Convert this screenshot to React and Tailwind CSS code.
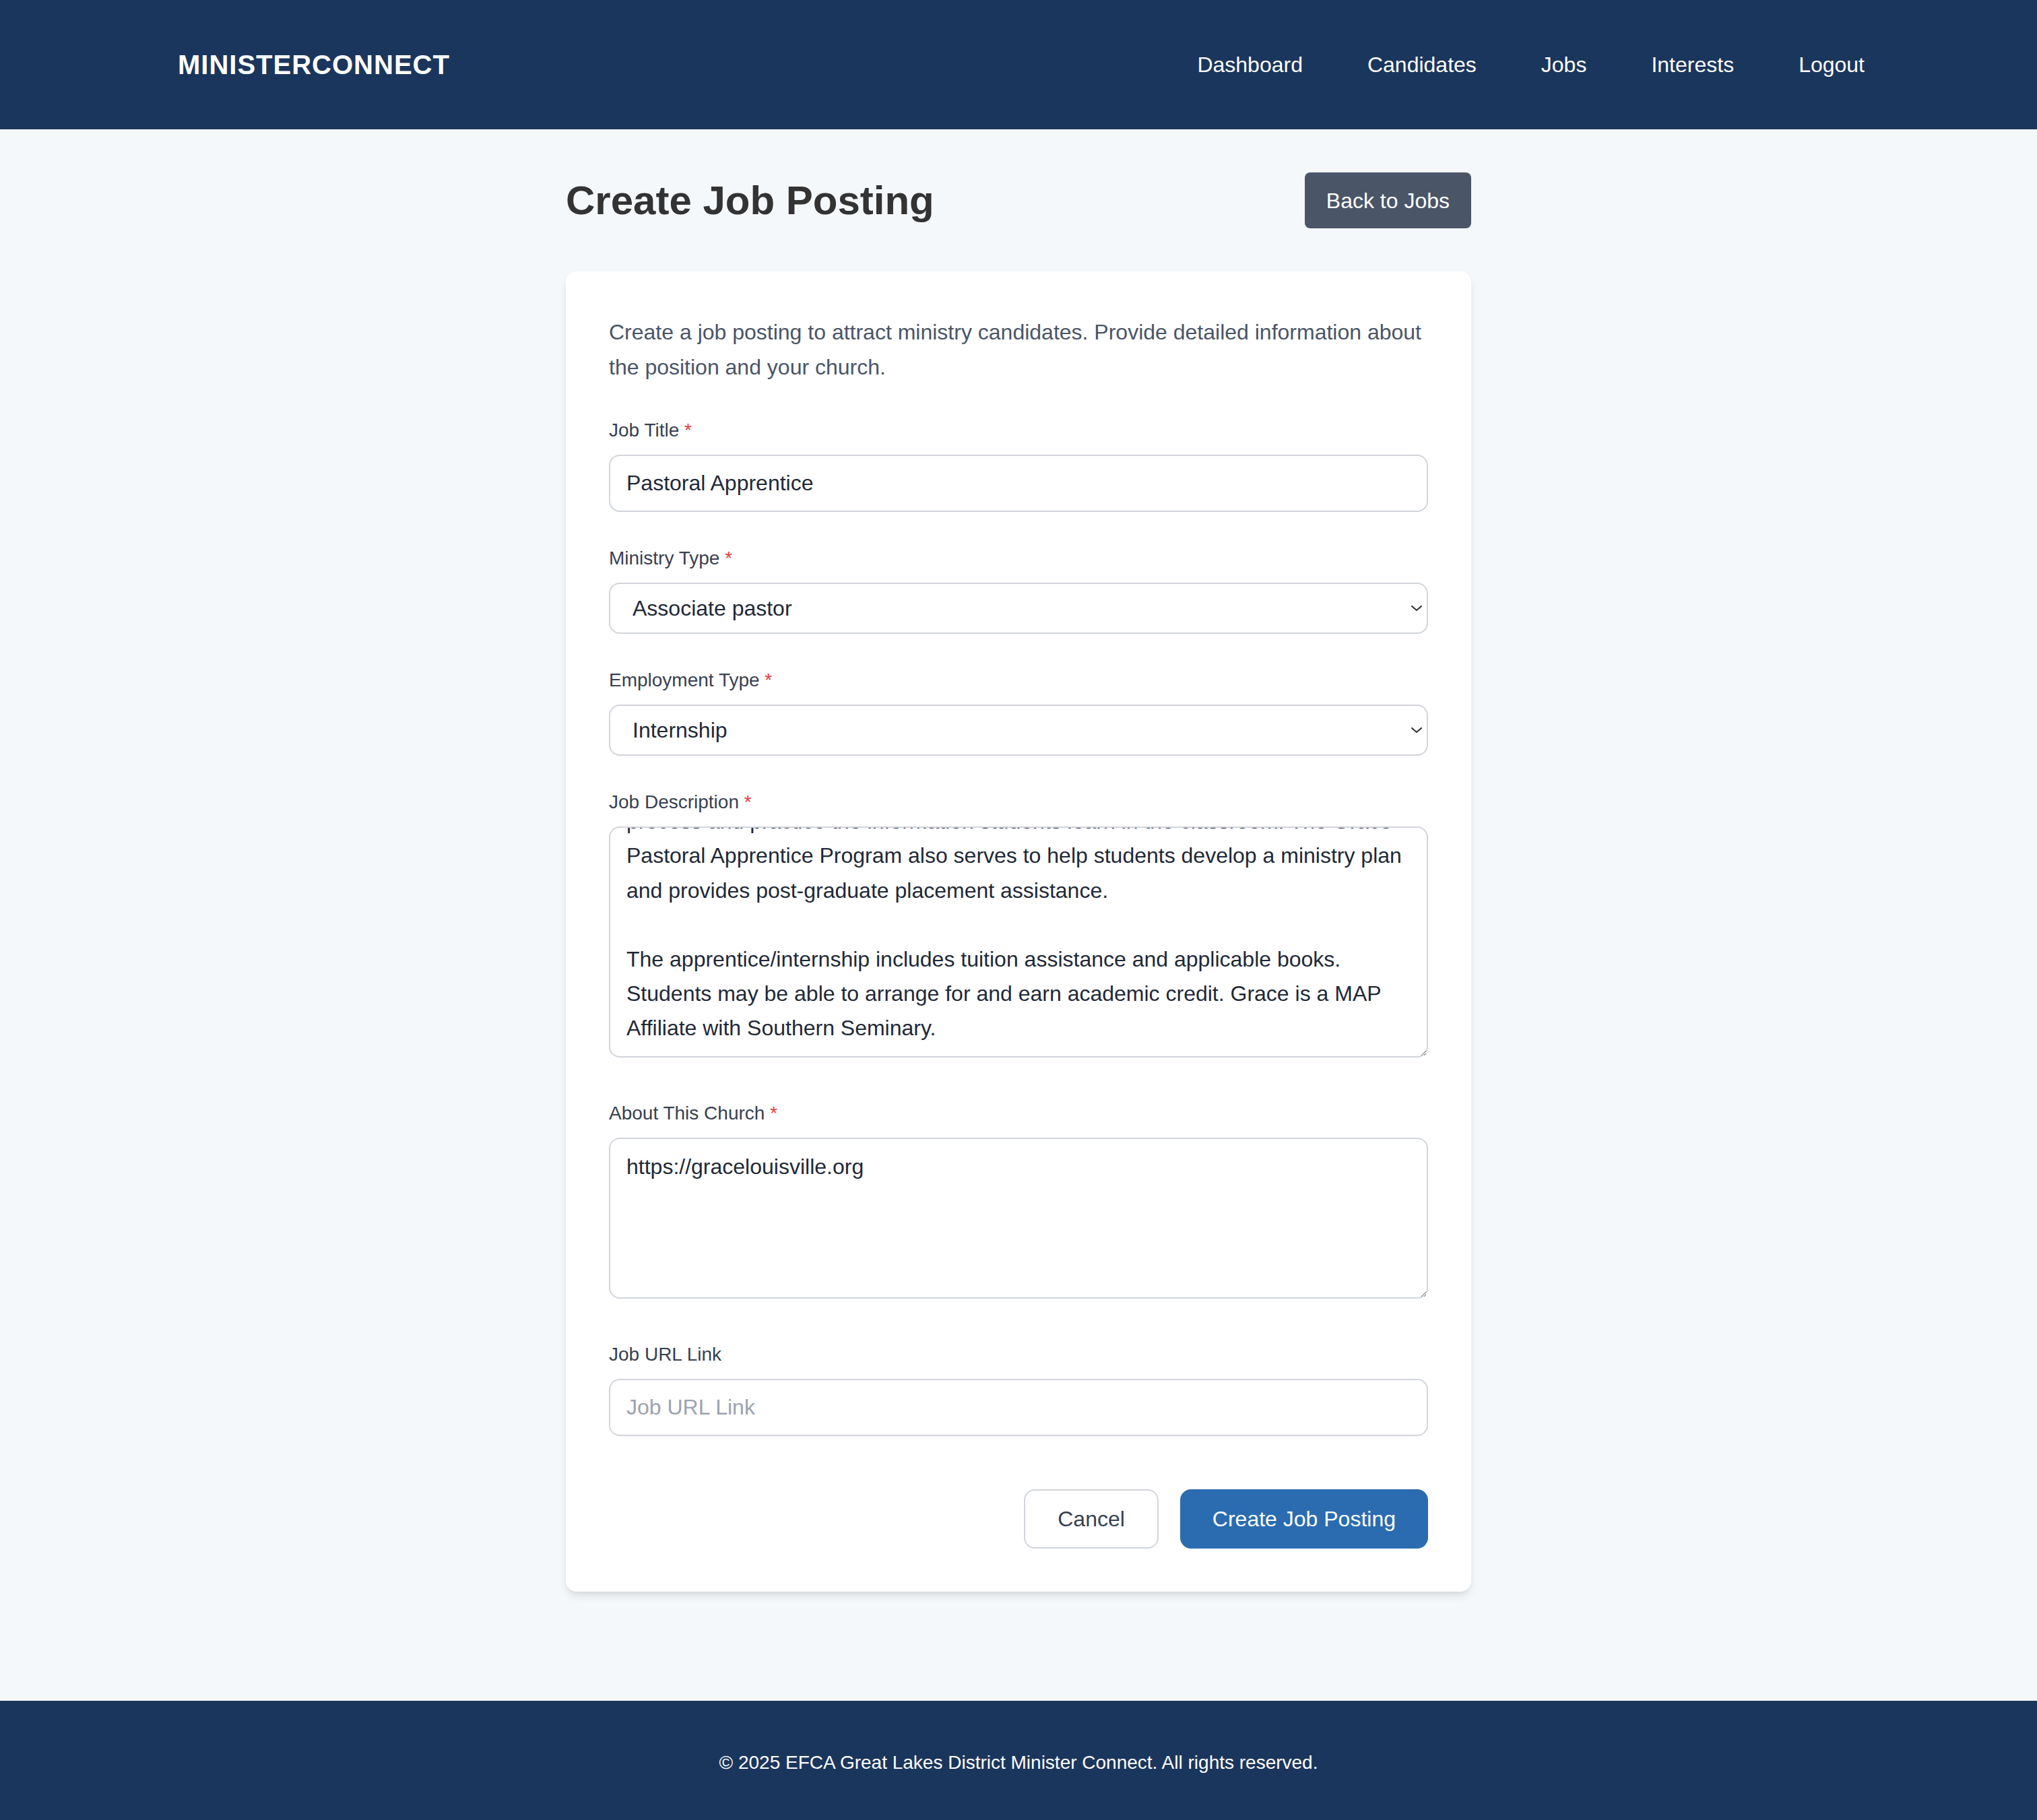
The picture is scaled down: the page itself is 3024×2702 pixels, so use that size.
import React, { useEffect, useRef } from "react";

const descText =
  "Grace Church is seeking a Pastoral Apprentice to join our staff for a two-year apprenticeship. The apprentice will work closely with our pastoral team, gaining hands-on experience in preaching, teaching, discipleship, pastoral care and church leadership.\n\nThe apprenticeship is designed to give seminary students an opportunity to\nprocess and practice the information students learn in the classroom. The Grace Pastoral Apprentice Program also serves to help students develop a ministry plan and provides post-graduate placement assistance.\n\nThe apprentice/internship includes tuition assistance and applicable books. Students may be able to arrange for and earn academic credit. Grace is a MAP Affiliate with Southern Seminary.";

function Label({ children, required }) {
  return (
    <label className="block text-[28px] leading-[41px] text-[#374151] mb-[16px]">
      {children}
      {required && <span className="text-[#e53e3e]"> *</span>}
    </label>
  );
}

function Chevron() {
  return (
    <svg
      className="absolute right-[8px] top-1/2 -translate-y-1/2 pointer-events-none"
      width="18"
      height="12"
      viewBox="0 0 18 12"
      fill="none"
    >
      <path d="M2 3l7 6 7-6" stroke="#333" strokeWidth="2.2" strokeLinecap="round" strokeLinejoin="round" />
    </svg>
  );
}

function SelectField({ value, options }) {
  return (
    <div className="relative">
      <select
        defaultValue={value}
        className="block w-full h-[76px] appearance-none bg-white border-2 border-[#d1d5db] rounded-[16px] pl-[33px] pr-[40px] text-[32px] text-[#1f2937] outline-none"
      >
        {options.map((o) => (
          <option key={o}>{o}</option>
        ))}
      </select>
      <Chevron />
    </div>
  );
}

export default function App() {
  const descRef = useRef(null);
  useEffect(() => {
    if (descRef.current) descRef.current.scrollTop = descRef.current.scrollHeight;
  }, []);

  return (
    <div className="min-h-screen flex flex-col bg-[#f5f8fb] font-['Liberation_Sans',Arial,Helvetica,sans-serif]">
      <header className="h-[192px] bg-[#1b365d] shrink-0">
        <div className="max-w-[2560px] mx-auto px-[32px] h-full flex items-center justify-between">
          <div className="text-white text-[40px] font-bold tracking-[1px]">MINISTERCONNECT</div>
          <nav className="flex items-center gap-[96px] text-white text-[32px] -mr-[8px]">
            <a>Dashboard</a>
            <a>Candidates</a>
            <a>Jobs</a>
            <a>Interests</a>
            <a>Logout</a>
          </nav>
        </div>
      </header>

      <main className="flex-1 pt-[64px] pb-[64px]">
        <div className="w-[1344px] mx-auto">
          <div className="flex items-center justify-between mb-[64px]">
            <h1 className="text-[60px] leading-[72px] font-bold text-[#333333]">Create Job Posting</h1>
            <button className="h-[83px] px-[32px] bg-[#4a5568] text-white text-[32px] rounded-[8px]">
              Back to Jobs
            </button>
          </div>

          <div className="bg-white rounded-[16px] p-[64px] shadow-[0_8px_14px_-2px_rgba(0,0,0,0.1),0_4px_8px_-4px_rgba(0,0,0,0.08)]">
            <p className="text-[32px] leading-[52px] text-[#4a5568] mb-[47px]">
              Create a job posting to attract ministry candidates. Provide detailed information about the position and
              your church.
            </p>

            <div className="mb-[48px]">
              <Label required>Job Title</Label>
              <input
                defaultValue="Pastoral Apprentice"
                className="block w-full h-[85px] border-2 border-[#d1d5db] rounded-[16px] px-[24px] text-[32px] text-[#1f2937] outline-none"
              />
            </div>

            <div className="mb-[48px]">
              <Label required>Ministry Type</Label>
              <SelectField value="Associate pastor" options={["Senior pastor", "Associate pastor", "Youth pastor"]} />
            </div>

            <div className="mb-[48px]">
              <Label required>Employment Type</Label>
              <SelectField value="Internship" options={["Full-time", "Part-time", "Internship"]} />
            </div>

            <div className="mb-[62px]">
              <Label required>Job Description</Label>
              <textarea
                ref={descRef}
                defaultValue={descText}
                className="block w-full h-[343px] border-2 border-[#d1d5db] rounded-[16px] px-[24px] py-[16px] text-[32px] leading-[1.6] text-[#1f2937] outline-none [scrollbar-width:none]"
              />
            </div>

            <div className="mb-[62px]">
              <Label required>About This Church</Label>
              <textarea
                defaultValue="https://gracelouisville.org"
                className="block w-full h-[239px] border-2 border-[#d1d5db] rounded-[16px] px-[24px] py-[16px] text-[32px] leading-[1.6] text-[#1f2937] outline-none [scrollbar-width:none]"
              />
            </div>

            <div>
              <Label>Job URL Link</Label>
              <input
                placeholder="Job URL Link"
                className="block w-full h-[85px] border-2 border-[#d1d5db] rounded-[16px] px-[24px] text-[32px] text-[#1f2937] placeholder:text-[#9ca3af] outline-none"
              />
            </div>

            <div className="flex justify-end gap-[32px] mt-[79px]">
              <button className="h-[88px] px-[48px] border-2 border-[#d1d5db] rounded-[16px] bg-white text-[32px] text-[#374151]">
                Cancel
              </button>
              <button className="h-[88px] px-[48px] rounded-[16px] bg-[#2b6cb0] text-[32px] text-white">
                Create Job Posting
              </button>
            </div>
          </div>
        </div>
      </main>

      <footer className="h-[177px] shrink-0 bg-[#1b365d] flex items-center justify-center pt-[6px]">
        <p className="text-white text-[28px] leading-[40px]">
          © 2025 EFCA Great Lakes District Minister Connect. All rights reserved.
        </p>
      </footer>
    </div>
  );
}
